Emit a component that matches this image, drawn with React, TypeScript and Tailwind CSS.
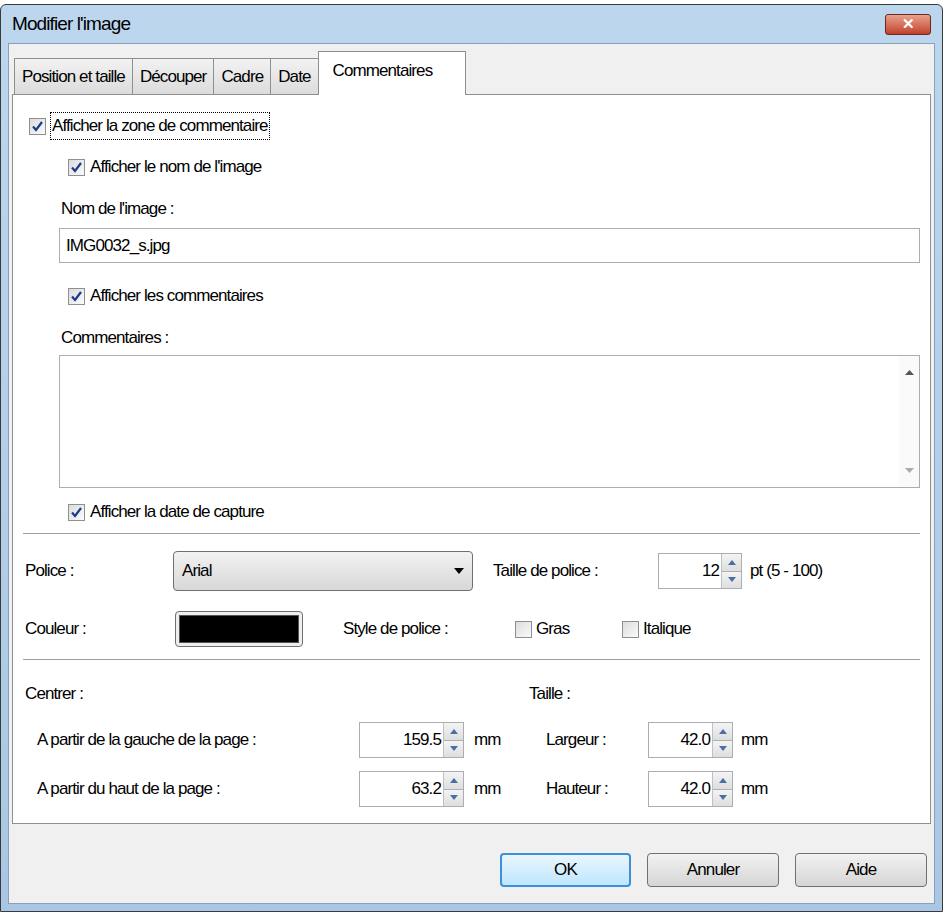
import React from "react";

const font = { fontFamily: '"Liberation Sans", Arial, sans-serif' };

function Check({ checked }: { checked?: boolean }) {
  return (
    <span className="inline-flex w-[17px] h-[17px] border border-[#8e8f8f] bg-gradient-to-br from-[#dcdcdc] to-[#fbfbfb] items-center justify-center shrink-0">
      {checked && (
        <svg width="13" height="13" viewBox="0 0 13 13">
          <path d="M2 6.5 L5 10 L11 2" fill="none" stroke="#1e3a8a" strokeWidth="2.2" />
        </svg>
      )}
    </span>
  );
}

function Spin({ value, w }: { value: string; w: string }) {
  return (
    <div className={`flex h-[36px] border border-[#abadb3] bg-white ${w}`}>
      <div className="flex-1 flex items-center justify-end pr-[2px]">{value}</div>
      <div className="w-[20px] flex flex-col border-l border-[#c0c0c0]">
        <div className="flex-1 flex items-center justify-center bg-gradient-to-b from-[#f4f4f4] to-[#dedede] border-b border-[#b0b0b0]">
          <svg width="8" height="5" viewBox="0 0 8 5"><path d="M0 5 L4 0 L8 5Z" fill="#4a6ea8" /></svg>
        </div>
        <div className="flex-1 flex items-center justify-center bg-gradient-to-b from-[#f4f4f4] to-[#dedede]">
          <svg width="8" height="5" viewBox="0 0 8 5"><path d="M0 0 L4 5 L8 0Z" fill="#4a6ea8" /></svg>
        </div>
      </div>
    </div>
  );
}

export default function App() {
  return (
    <div style={font} className="w-[943px] h-[915px] bg-white pt-[4px] text-[17px] text-black tracking-[-0.9px]">
      <div className="h-[908px] border border-[#3a3a3a] rounded-t-[6px] bg-gradient-to-b from-[#bcd6ee] to-[#a9c7e4] p-[7px] pt-0 flex flex-col">
        <div className="h-[38px] flex items-center justify-between px-[4px]">
          <span className="text-[19px]">Modifier l'image</span>
          <div className="w-[46px] h-[21px] rounded-[3px] border border-[#6b2a1f] bg-gradient-to-b from-[#e8a08c] to-[#c0402a] flex items-center justify-center text-white font-bold text-[15px]">
            ✕
          </div>
        </div>
        <div className="flex-1 bg-[#f0f0f0] border border-[#8aa0b8] px-[3px] flex flex-col">
          <div className="flex items-end h-[50px] pl-[2px]">
            {["Position et taille", "Découper", "Cadre", "Date"].map((t) => (
              <div key={t} className="h-[36px] px-[7px] border border-[#8e8f8f] border-b-0 -mr-px bg-gradient-to-b from-[#f2f2f2] to-[#dcdcdc] flex items-center">
                {t}
              </div>
            ))}
            <div className="h-[44px] w-[148px] px-[14px] border border-[#8e8f8f] border-b-0 bg-white flex items-start pt-[6px] relative -mb-px z-10">
              Commentaires
            </div>
          </div>
          <div className="h-[730px] bg-white border border-[#8e8f8f] pt-[20px] pb-[10px] px-[10px] flex flex-col">
            <div className="flex items-center gap-[4px] h-[22px] pl-[6px]">
              <Check checked />
              <span className="border border-dotted border-black px-px">Afficher la zone de commentaire</span>
            </div>
            <div className="pl-[36px] flex flex-col">
              <div className="flex items-center gap-[5px] mt-[19px] h-[22px] pl-[9px]">
                <Check checked /> Afficher le nom de l'image
              </div>
              <div className="mt-[18px] h-[22px] pl-[2px]">Nom de l'image :</div>
              <div className="mt-[10px] h-[35px] border border-[#abadb3] flex items-center px-[6px]">IMG0032_s.jpg</div>
              <div className="flex items-center gap-[5px] mt-[22px] h-[22px] pl-[9px]">
                <Check checked /> Afficher les commentaires
              </div>
              <div className="mt-[18px] h-[22px] pl-[2px]">Commentaires :</div>
              <div className="mt-[8px] h-[133px] border border-[#abadb3] flex justify-end">
                <div className="w-[20px] flex flex-col justify-between items-center py-[14px] bg-[#fafafa]">
                  <svg width="9" height="5" viewBox="0 0 9 5"><path d="M0 5 L4.5 0 L9 5Z" fill="#555" /></svg>
                  <svg width="9" height="5" viewBox="0 0 9 5"><path d="M0 0 L4.5 5 L9 0Z" fill="#aaa" /></svg>
                </div>
              </div>
              <div className="flex items-center gap-[5px] mt-[13px] h-[22px] pl-[9px]">
                <Check checked /> Afficher la date de capture
              </div>
            </div>
            <div className="h-[2px] border-t border-[#a0a0a0] border-b border-b-white mt-[10px]" />
            <div className="flex items-center mt-[16px] h-[40px]">
              <span className="w-[150px] pl-[2px]">Police :</span>
              <div className="w-[300px] h-[40px] rounded-[4px] border border-[#707070] bg-gradient-to-b from-[#f2f2f2] to-[#d8d8d8] flex items-center justify-between px-[8px]">
                <span>Arial</span>
                <svg width="10" height="6" viewBox="0 0 10 6"><path d="M0 0 L5 6 L10 0Z" fill="#000" /></svg>
              </div>
              <span className="ml-[20px] w-[165px]">Taille de police :</span>
              <Spin value="12" w="w-[84px]" />
              <span className="ml-[8px]">pt (5 - 100)</span>
            </div>
            <div className="flex items-center mt-[20px] h-[36px]">
              <span className="w-[152px] pl-[2px]">Couleur :</span>
              <div className="w-[128px] h-[36px] rounded-[4px] border border-[#707070] bg-[#eee] p-[3px]">
                <div className="w-full h-full bg-black border border-[#555]" />
              </div>
              <span className="ml-[40px] w-[172px]">Style de police :</span>
              <Check /><span className="ml-[4px] w-[86px]">Gras</span>
              <Check /><span className="ml-[4px]">Italique</span>
            </div>
            <div className="h-[2px] border-t border-[#a0a0a0] border-b border-b-white mt-[12px]" />
            <div className="flex mt-[20px] h-[22px] pl-[2px]">
              <span className="w-[504px]">Centrer :</span>
              <span>Taille :</span>
            </div>
            <div className="flex items-center mt-[19px] pl-[14px]">
              <span className="w-[322px]">A partir de la gauche de la page :</span>
              <Spin value="159.5" w="w-[105px]" />
              <span className="ml-[10px] w-[72px]">mm</span>
              <span className="w-[102px]">Largeur :</span>
              <Spin value="42.0" w="w-[85px]" />
              <span className="ml-[8px]">mm</span>
            </div>
            <div className="flex items-center mt-[13px] pl-[14px]">
              <span className="w-[322px]">A partir du haut de la page :</span>
              <Spin value="63.2" w="w-[105px]" />
              <span className="ml-[10px] w-[72px]">mm</span>
              <span className="w-[102px]">Hauteur :</span>
              <Spin value="42.0" w="w-[85px]" />
              <span className="ml-[8px]">mm</span>
            </div>
          </div>
          <div className="flex justify-end gap-[16px] mt-[29px] pr-[4px]">
            <div className="w-[131px] h-[34px] rounded-[4px] border-2 border-[#3c8fd8] bg-gradient-to-b from-[#eaf6fd] to-[#bee6fd] flex items-center justify-center">OK</div>
            <div className="w-[132px] h-[34px] rounded-[4px] border border-[#707070] bg-gradient-to-b from-[#f2f2f2] to-[#d5d5d5] flex items-center justify-center">Annuler</div>
            <div className="w-[132px] h-[34px] rounded-[4px] border border-[#707070] bg-gradient-to-b from-[#f2f2f2] to-[#d5d5d5] flex items-center justify-center">Aide</div>
          </div>
        </div>
      </div>
    </div>
  );
}
